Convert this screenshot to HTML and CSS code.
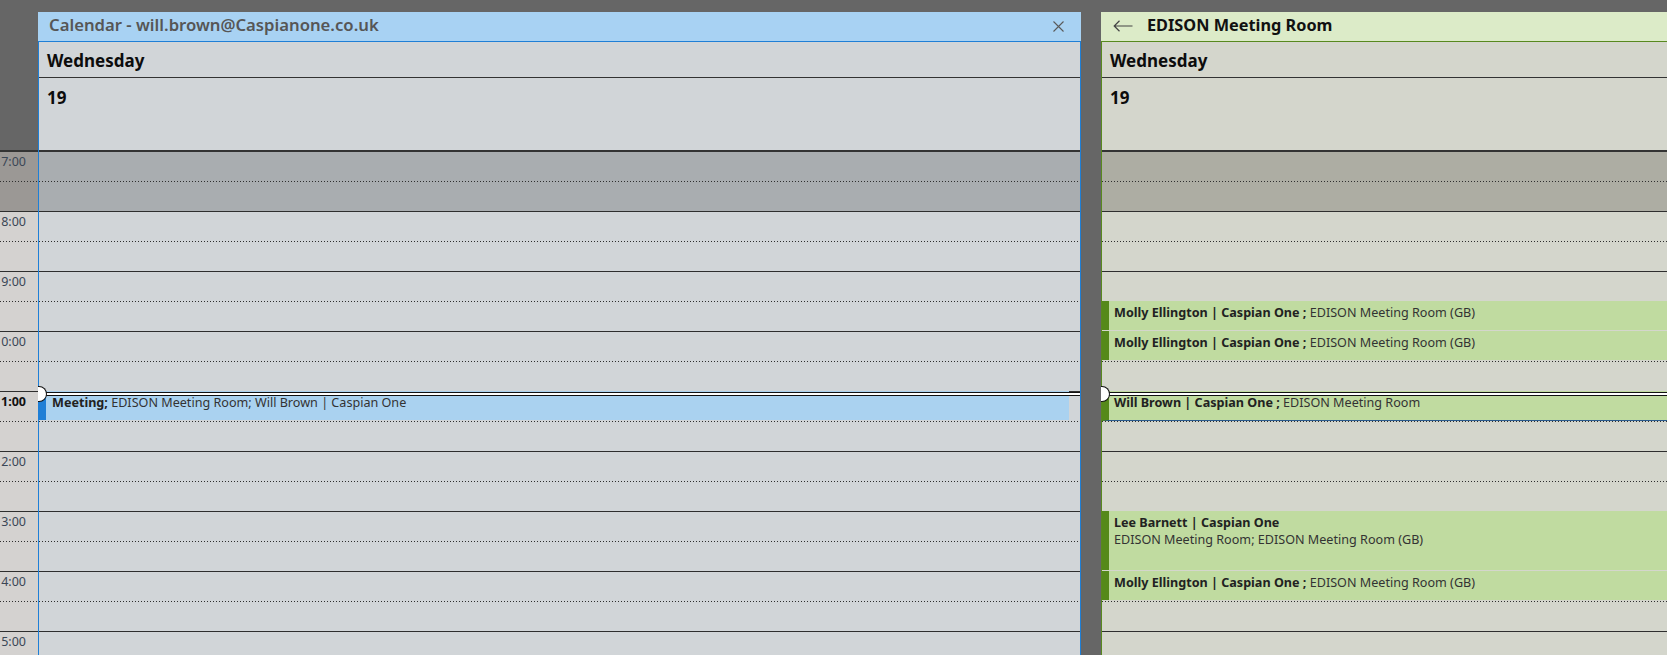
FILE: index.html
```html
<!DOCTYPE html>
<html lang="en">
<head>
<meta charset="utf-8">
<title>Calendar</title>
<link rel="stylesheet" href="styles.css">
</head>
<body>
<div class="app">
  <div class="gutter">
    <div class="gutter-head"></div>
    <div class="grid">
      <div class="hour off"><div class="half first"><span class="lbl">7:00</span></div><div class="half second"></div></div>
      <div class="hour"><div class="half first"><span class="lbl">8:00</span></div><div class="half second"></div></div>
      <div class="hour"><div class="half first"><span class="lbl">9:00</span></div><div class="half second"></div></div>
      <div class="hour"><div class="half first"><span class="lbl">0:00</span></div><div class="half second"></div></div>
      <div class="hour"><div class="half first"><span class="lbl cur">1:00</span></div><div class="half second"></div></div>
      <div class="hour"><div class="half first"><span class="lbl">2:00</span></div><div class="half second"></div></div>
      <div class="hour"><div class="half first"><span class="lbl">3:00</span></div><div class="half second"></div></div>
      <div class="hour"><div class="half first"><span class="lbl">4:00</span></div><div class="half second"></div></div>
      <div class="hour"><div class="half first"><span class="lbl">5:00</span></div><div class="half second"></div></div>
    </div>
  </div>

  <div class="panel mine">
    <div class="phead">
      <span class="ptitle">Calendar - will.brown@Caspianone.co.uk</span>
      <svg class="close" width="11" height="11" viewBox="0 0 11 11"><path d="M0.5 0.5 L10.5 10.5 M10.5 0.5 L0.5 10.5" stroke="#5a5a5a" stroke-width="1.1" fill="none"/></svg>
    </div>
    <div class="pbody">
      <div class="dayname">Wednesday</div>
      <div class="daydate">19</div>
      <div class="grid">
        <div class="hour off"><div class="half first"></div><div class="half second"></div></div>
        <div class="hour"><div class="half first"></div><div class="half second"></div></div>
        <div class="hour"><div class="half first"></div><div class="half second"></div></div>
        <div class="hour"><div class="half first"></div><div class="half second"></div></div>
        <div class="hour"><div class="half first"></div><div class="half second"></div></div>
        <div class="hour"><div class="half first"></div><div class="half second"></div></div>
        <div class="hour"><div class="half first"></div><div class="half second"></div></div>
        <div class="hour"><div class="half first"></div><div class="half second"></div></div>
        <div class="hour"><div class="half first"></div><div class="half second"></div></div>

        <div class="ev ev-blue" style="top:239px;height:29px"><span class="b">Meeting;</span>&nbsp;EDISON Meeting Room; Will Brown | Caspian One</div>

        <div class="now"></div>
        <div class="dot"></div>
      </div>
    </div>
  </div>

  <div class="panel room">
    <div class="phead">
      <svg class="back" width="20" height="12" viewBox="0 0 20 12"><path d="M19.5 6 H1.2 M6.5 0.8 L1.2 6 L6.5 11.2" stroke="#444" stroke-width="1.2" fill="none"/></svg>
      <span class="ptitle">EDISON Meeting Room</span>
    </div>
    <div class="pbody">
      <div class="dayname">Wednesday</div>
      <div class="daydate">19</div>
      <div class="grid">
        <div class="hour off"><div class="half first"></div><div class="half second"></div></div>
        <div class="hour"><div class="half first"></div><div class="half second"></div></div>
        <div class="hour"><div class="half first"></div><div class="half second"></div></div>
        <div class="hour"><div class="half first"></div><div class="half second"></div></div>
        <div class="hour"><div class="half first"></div><div class="half second"></div></div>
        <div class="hour"><div class="half first"></div><div class="half second"></div></div>
        <div class="hour"><div class="half first"></div><div class="half second"></div></div>
        <div class="hour"><div class="half first"></div><div class="half second"></div></div>
        <div class="hour"><div class="half first"></div><div class="half second"></div></div>

        <div class="ev ev-green" style="top:149px;height:29px"><span class="b">Molly Ellington | Caspian One ;</span>&nbsp;EDISON Meeting Room (GB)</div>
        <div class="ev ev-green" style="top:179px;height:29px"><span class="b">Molly Ellington | Caspian One ;</span>&nbsp;EDISON Meeting Room (GB)</div>
        <div class="ev ev-green ev-sel" style="top:239px;height:30px"><span class="b">Will Brown | Caspian One ;</span>&nbsp;EDISON Meeting Room</div>
        <div class="ev ev-green ev-multi" style="top:359px;height:59px"><span class="b">Lee Barnett | Caspian One</span><span class="line">EDISON Meeting Room; EDISON Meeting Room (GB)</span></div>
        <div class="ev ev-green" style="top:419px;height:29px"><span class="b">Molly Ellington | Caspian One ;</span>&nbsp;EDISON Meeting Room (GB)</div>

        <div class="now"></div>
        <div class="dot"></div>
      </div>
    </div>
  </div>
</div>
</body>
</html>
```

FILE: styles.css
```css
* { box-sizing: border-box; }

html, body {
  margin: 0;
  padding: 0;
  height: 655px;
  overflow: hidden;
  background: #666666;
  font-family: "Noto Sans", "Open Sans", "Liberation Sans", sans-serif;
}

.app {
  display: flex;
  height: 655px;
  overflow: hidden;
  background: #666666;
}

/* ---------- time gutter ---------- */
.gutter {
  width: 38px;
  flex: 0 0 38px;
  display: flex;
  flex-direction: column;
  overflow: hidden;
}
.gutter-head {
  height: 152px;
  flex: 0 0 152px;
  border-bottom: 2px solid #333333;
}
.gutter .hour { background: #d4d2d0; }
.gutter .hour.off { background: #9b9895; }

.lbl {
  display: block;
  white-space: nowrap;
  text-align: right;
  padding-right: 12px;
  padding-top: 2px;
  font-size: 12.5px;
  line-height: 16px;
  color: #3b4756;
}
.lbl.cur {
  font-weight: 700;
  color: #111111;
}

/* ---------- grid common ---------- */
.grid {
  position: relative;
  flex: 1;
}
.hour {
  height: 60px;
}
.half {
  height: 30px;
}
.half.first {
  background-image: linear-gradient(to right, #2e2e2e 1px, transparent 1px);
  background-size: 3px 1px;
  background-repeat: repeat-x;
  background-position: left bottom;
}
.half.second {
  border-bottom: 1px solid #2e2e2e;
}

/* ---------- panels ---------- */
.panel {
  display: flex;
  flex-direction: column;
  padding-top: 12px;
}
.panel.mine {
  width: 1043px;
  flex: 0 0 1043px;
  margin-right: 20px;
}
.panel.room {
  flex: 1;
  min-width: 0;
}

.phead {
  height: 30px;
  flex: 0 0 30px;
  display: flex;
  align-items: center;
  padding-bottom: 3px;
}
.mine .phead {
  background: #a8d2f3;
  border-bottom: 1px solid #1f7fd6;
  justify-content: space-between;
  padding-left: 11px;
  padding-right: 17px;
}
.room .phead {
  background: #dcebc8;
  border-bottom: 1px solid #58891f;
  padding-left: 12px;
  gap: 14px;
}
.phead svg { margin-top: 2px; }
.ptitle {
  font-size: 16.7px;
  font-weight: 600;
  white-space: nowrap;
  line-height: 22px;
}
.mine .ptitle { color: #565656; }
.room .ptitle { color: #111111; font-weight: 700; font-size: 16.3px; }

.pbody {
  flex: 1;
  display: flex;
  flex-direction: column;
  min-height: 0;
}
.mine .pbody {
  border-left: 1px solid #1f7fd6;
  border-right: 1px solid #1f7fd6;
  background: #d1d5d8;
}
.room .pbody {
  border-left: 1px solid #58891f;
  background: #d4d6cc;
}

.dayname {
  height: 36px;
  flex: 0 0 36px;
  border-bottom: 1px solid #333333;
  padding: 7px 0 0 8px;
  font-size: 17px;
  font-weight: 700;
  color: #0c0c0c;
  line-height: 24px;
}
.daydate {
  height: 74px;
  flex: 0 0 74px;
  border-bottom: 2px solid #333333;
  padding: 8px 0 0 8px;
  font-size: 17px;
  font-weight: 700;
  color: #0c0c0c;
  line-height: 24px;
}

.mine .hour { background: #d1d5d8; }
.mine .hour.off { background: #a9adb0; }
.room .hour { background: #d4d6cc; }
.room .hour.off { background: #adada3; }

/* ---------- events ---------- */
.ev {
  position: absolute;
  left: 0;
  font-size: 12.6px;
  line-height: 16px;
  padding-top: 4px;
  color: #333333;
  white-space: nowrap;
  overflow: hidden;
}
.ev .b {
  font-weight: 700;
  color: #222222;
}
.ev-blue {
  right: 11px;
  background: #aad2f0;
  border-left: 7px solid #1f7fd6;
  padding-left: 6px;
}
.ev-green {
  right: 0;
  background: #c0dba0;
  border-left: 7px solid #55891a;
  padding-left: 5px;
}
.ev-sel {
  border-bottom: 1px solid #2a5a8c;
}
.ev-multi .b,
.ev-multi .line {
  display: block;
}
.ev-multi .line {
  line-height: 17px;
}

/* ---------- current time ---------- */
.now {
  position: absolute;
  left: 0;
  right: 0;
  top: 240px;
  height: 4px;
  border-top: 1px solid #111111;
  border-bottom: 1px solid #111111;
  background: #ffffff;
  z-index: 3;
}
.dot {
  position: absolute;
  left: -1px;
  top: 234px;
  width: 9px;
  height: 16px;
  background: #ffffff;
  border: 1px solid #111111;
  border-left: none;
  border-radius: 0 8px 8px 0;
  z-index: 4;
}
```
